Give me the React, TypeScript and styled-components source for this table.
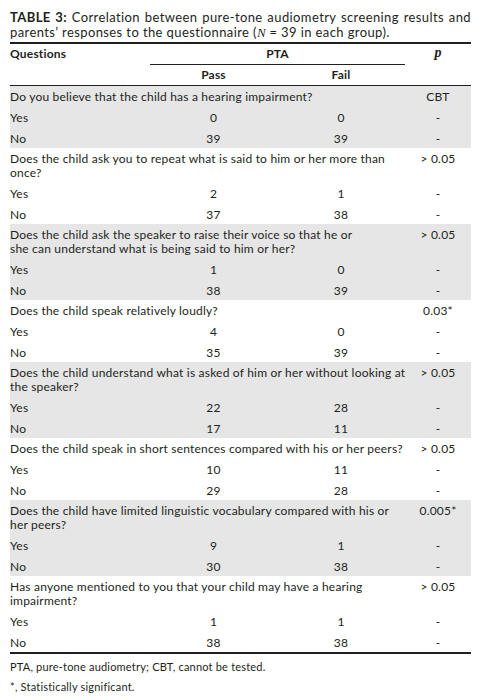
import React from 'react'
import styled, { createGlobalStyle } from 'styled-components'

const GlobalStyle = createGlobalStyle`
  html, body {
    margin: 0;
    padding: 0;
    background: #ffffff;
  }
  body {
    font-family: 'Lato', 'Open Sans', sans-serif;
    color: #231f20;
  }
`

const Page = styled.div`
  width: 461px;
  padding: 10px 15px 0 10px;
`

const Caption = styled.div`
  font-size: 13px;
  line-height: 15px;
  letter-spacing: 0.4px;
  padding-bottom: 2px;
`

const CaptionLine = styled.div<{ $justify?: boolean }>`
  white-space: ${(p) => (p.$justify ? 'normal' : 'nowrap')};
  text-align: ${(p) => (p.$justify ? 'justify' : 'left')};
  text-align-last: ${(p) => (p.$justify ? 'justify' : 'left')};
`

const CaptionLabel = styled.span`
  font-weight: 700;
`

const SerifItalic = styled.span`
  font-family: 'Liberation Serif', serif;
  font-style: italic;
  letter-spacing: 0;
`

const Table = styled.table`
  width: 100%;
  border-collapse: collapse;
  border-top: 2px solid #231f20;
  border-bottom: 2px solid #231f20;
  font-size: 12px;
  letter-spacing: 0.2px;
  line-height: 13px;
  table-layout: fixed;
`

const HeadCell = styled.th<{ $align?: 'left' | 'center'; $underline?: boolean }>`
  font-weight: 700;
  text-align: ${(p) => p.$align || 'center'};
  padding: 3px 0 4px;
  vertical-align: top;
  border-bottom: ${(p) => (p.$underline ? '1px solid #231f20' : 'none')};
`

const SubHeadRow = styled.tr`
  border-bottom: 1px solid #231f20;
`

const PHead = styled.th`
  font-family: 'Liberation Serif', serif;
  font-style: italic;
  font-weight: 700;
  font-size: 14px;
  text-align: center;
  vertical-align: top;
  padding: 2px 0 0;
`

const Row = styled.tr<{ $shaded: boolean }>`
  background: ${(p) => (p.$shaded ? '#e6e6e7' : 'transparent')};
`

const QuestionCell = styled.td`
  padding: 4px 4px 3px 0;
  line-height: 14px;
  vertical-align: top;
`

const QuestionLine = styled.div`
  white-space: nowrap;
`

const LabelCell = styled.td`
  padding: 4px 0 3.5px;
`

const NumCell = styled.td<{ $top?: boolean }>`
  text-align: center;
  padding: ${(p) => (p.$top ? '4px 0 3px' : '4px 0 3.5px')};
  line-height: ${(p) => (p.$top ? '14px' : '13px')};
  vertical-align: top;
`

const Footnotes = styled.div`
  font-size: 11px;
  letter-spacing: 0.2px;
  line-height: 20px;
  padding-top: 3px;
`

type Group = {
  q: string[]
  p: string
  yes: [number, number]
  no: [number, number]
}

const groups: Group[] = [
  { q: ['Do you believe that the child has a hearing impairment?'], p: 'CBT', yes: [0, 0], no: [39, 39] },
  {
    q: ['Does the child ask you to repeat what is said to him or her more than', 'once?'],
    p: '> 0.05',
    yes: [2, 1],
    no: [37, 38],
  },
  {
    q: [
      'Does the child ask the speaker to raise their voice so that he or',
      'she can understand what is being said to him or her?',
    ],
    p: '> 0.05',
    yes: [1, 0],
    no: [38, 39],
  },
  { q: ['Does the child speak relatively loudly?'], p: '0.03*', yes: [4, 0], no: [35, 39] },
  {
    q: ['Does the child understand what is asked of him or her without looking at', 'the speaker?'],
    p: '> 0.05',
    yes: [22, 28],
    no: [17, 11],
  },
  {
    q: ['Does the child speak in short sentences compared with his or her peers?'],
    p: '> 0.05',
    yes: [10, 11],
    no: [29, 28],
  },
  {
    q: ['Does the child have limited linguistic vocabulary compared with his or', 'her peers?'],
    p: '0.005*',
    yes: [9, 1],
    no: [30, 38],
  },
  {
    q: ['Has anyone mentioned to you that your child may have a hearing', 'impairment?'],
    p: '> 0.05',
    yes: [1, 1],
    no: [38, 38],
  },
]

const App: React.FC = () => {
  return (
    <Page>
      <GlobalStyle />
      <Caption>
        <CaptionLine $justify>
          <CaptionLabel>TABLE 3:</CaptionLabel> Correlation between pure-tone audiometry screening results and
        </CaptionLine>
        <CaptionLine>
          parents’ responses to the questionnaire (<SerifItalic>N</SerifItalic> = 39 in each group).
        </CaptionLine>
      </Caption>
      <Table>
        <colgroup>
          <col style={{ width: 140 }} />
          <col style={{ width: 127 }} />
          <col style={{ width: 128 }} />
          <col style={{ width: 66 }} />
        </colgroup>
        <thead>
          <tr>
            <HeadCell $align="left">Questions</HeadCell>
            <HeadCell colSpan={2} $underline>
              PTA
            </HeadCell>
            <PHead>p</PHead>
          </tr>
          <SubHeadRow>
            <HeadCell />
            <HeadCell>Pass</HeadCell>
            <HeadCell>Fail</HeadCell>
            <HeadCell />
          </SubHeadRow>
        </thead>
        <tbody>
          {groups.map((g, i) => {
            const shaded = i % 2 === 0
            return (
              <React.Fragment key={i}>
                <Row $shaded={shaded}>
                  <QuestionCell colSpan={3}>
                    {g.q.map((line) => (
                      <QuestionLine key={line}>{line}</QuestionLine>
                    ))}
                  </QuestionCell>
                  <NumCell $top>{g.p}</NumCell>
                </Row>
                <Row $shaded={shaded}>
                  <LabelCell>Yes</LabelCell>
                  <NumCell>{g.yes[0]}</NumCell>
                  <NumCell>{g.yes[1]}</NumCell>
                  <NumCell>-</NumCell>
                </Row>
                <Row $shaded={shaded}>
                  <LabelCell>No</LabelCell>
                  <NumCell>{g.no[0]}</NumCell>
                  <NumCell>{g.no[1]}</NumCell>
                  <NumCell>-</NumCell>
                </Row>
              </React.Fragment>
            )
          })}
        </tbody>
      </Table>
      <Footnotes>
        <div>PTA, pure-tone audiometry; CBT, cannot be tested.</div>
        <div>*, Statistically significant.</div>
      </Footnotes>
    </Page>
  )
}

export default App
